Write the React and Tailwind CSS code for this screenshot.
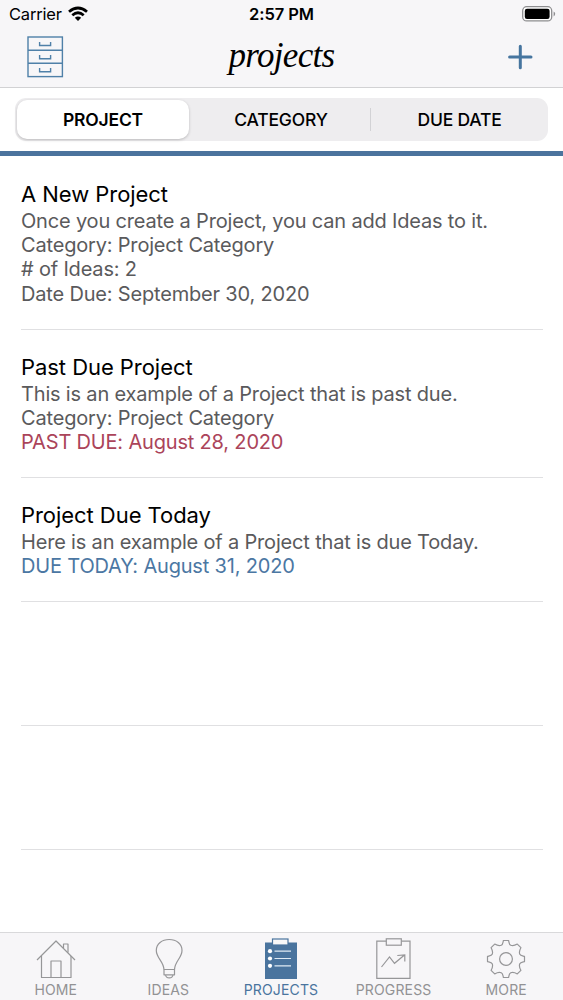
import React from "react";

const projects = [
  {
    title: "A New Project",
    height: "h-[173px]",
    lines: [
      { text: "Once you create a Project, you can add Ideas to it.", color: "text-[#5a5a5c]" },
      { text: "Category: Project Category", color: "text-[#5a5a5c]" },
      { text: "# of Ideas: 2", color: "text-[#5a5a5c]" },
      { text: "Date Due: September 30, 2020", color: "text-[#5a5a5c]" },
    ],
  },
  {
    title: "Past Due Project",
    height: "h-[148px]",
    lines: [
      { text: "This is an example of a Project that is past due.", color: "text-[#5a5a5c]" },
      { text: "Category: Project Category", color: "text-[#5a5a5c]" },
      { text: "PAST DUE: August 28, 2020", color: "text-[#ab445a]" },
    ],
  },
  {
    title: "Project Due Today",
    height: "h-[124px]",
    lines: [
      { text: "Here is an example of a Project that is due Today.", color: "text-[#5a5a5c]" },
      { text: "DUE TODAY: August 31, 2020", color: "text-[#4b77a3]" },
    ],
  },
];

function WifiIcon() {
  return (
    <svg className="ml-[6px] h-[16px] w-[20px]" viewBox="0 0 20 16" fill="none" stroke="#000" strokeWidth="2.8">
      <path d="M1 5.8Q10 -1.8 19 5.8" />
      <path d="M4.3 9.2Q10 4.4 15.7 9.2" />
      <path d="M6.8 11.8Q10 9 13.2 11.8L10 15Z" fill="#000" stroke="none" />
    </svg>
  );
}

function BatteryIcon() {
  return (
    <svg className="h-[16px] w-[34px]" viewBox="0 0 34 16">
      <rect x="0.7" y="0.7" width="29" height="14.2" rx="4" fill="#fff" stroke="#8d8d8f" strokeWidth="1.3" />
      <rect x="2.8" y="2.7" width="24.8" height="10.2" rx="2.2" fill="#000" />
      <path d="M31.6 5.4Q33.2 6 33.2 7.8T31.6 10.4Z" fill="#8d8d8f" />
    </svg>
  );
}

function CabinetIcon() {
  return (
    <svg className="h-[42px] w-[37px]" viewBox="0 0 37 42" fill="none" stroke="#4f80a8" strokeWidth="1.4">
      <rect x="1" y="1" width="34.4" height="39.6" />
      <path d="M1 14.2H35.4M1 27.2H35.4" />
      <path d="M12.6 6V9.5H23.6V6M12.6 19V22.8H23.6V19M12.6 32V35.8H23.6V32" />
    </svg>
  );
}

function HomeIcon() {
  return (
    <svg className="h-[44px] w-[44px]" viewBox="0 0 44 44" fill="none" stroke="#969698" strokeWidth="1.2" strokeLinejoin="round">
      <path d="M3 25L22 6L41 25" />
      <path d="M7.5 21V42.5H37V21" />
      <path d="M17 42.5V26H27V42.5" />
      <path d="M29.5 13V9H34V17.5" />
    </svg>
  );
}

function BulbIcon() {
  return (
    <svg className="h-[44px] w-[44px]" viewBox="0 0 44 44" fill="none" stroke="#969698" strokeWidth="1.2" strokeLinejoin="round">
      <path d="M17 34.5C16.5 26 9.3 23 9.3 15.5C9.3 8.8 15 4.5 22.2 4.5S35 8.8 35 15.5C35 23 27.8 26 27.5 34.5Z" />
      <path d="M17 34.5V39.8H27.5V34.5M18.5 39.8C19 44 25.5 44 26 39.8" />
    </svg>
  );
}

function ProjectsIcon() {
  return (
    <svg className="h-[44px] w-[44px]" viewBox="0 0 44 44">
      <rect x="6" y="7.5" width="32" height="36.5" fill="#4a749e" />
      <rect x="13.5" y="4" width="15.5" height="6" fill="#f7f7f8" stroke="#4a749e" strokeWidth="1.2" />
      <g fill="#fff">
        <circle cx="11" cy="16.2" r="2.1" /><circle cx="11" cy="23.5" r="2.1" /><circle cx="11" cy="30.8" r="2.1" />
      </g>
      <path d="M15.5 16.2H32M15.5 23.5H32M15.5 30.8H32" stroke="#dfeaf4" strokeWidth="1.2" />
    </svg>
  );
}

function ProgressIcon() {
  return (
    <svg className="h-[44px] w-[44px]" viewBox="0 0 44 44" fill="none" stroke="#969698" strokeWidth="1.2">
      <path d="M14.3 6.2H4.8V43.4H38V6.2H29.3" />
      <rect x="14.3" y="3.8" width="15" height="6.4" />
      <path d="M9.5 32L17.5 22L22.5 28.3L32.5 20M25.3 20.5L32.8 19.8V26.5" />
    </svg>
  );
}

function GearIcon() {
  return (
    <svg className="h-[44px] w-[44px]" viewBox="-22 -22 44 44" fill="none" stroke="#969698" strokeWidth="1.2" strokeLinejoin="round">
      <path
        transform="translate(-1 2)"
        d="M-2.6 -18.5H2.6C3.2 -15.8 3.2 -14.4 4.7 -13.8C6.6 -13 7.6 -12.8 11.3 -14.9L14.9 -11.3C12.8 -7.6 13 -6.6 13.8 -4.7C14.4 -3.2 15.8 -3.2 18.5 -2.6V2.6C15.8 3.2 14.4 3.2 13.8 4.7C13 6.6 12.8 7.6 14.9 11.3L11.3 14.9C7.6 12.8 6.6 13 4.7 13.8C3.2 14.4 3.2 15.8 2.6 18.5H-2.6C-3.2 15.8 -3.2 14.4 -4.7 13.8C-6.6 13 -7.6 12.8 -11.3 14.9L-14.9 11.3C-12.8 7.6 -13 6.6 -13.8 4.7C-14.4 3.2 -15.8 3.2 -18.5 2.6V-2.6C-15.8 -3.2 -14.4 -3.2 -13.8 -4.7C-13 -6.6 -12.8 -7.6 -14.9 -11.3L-11.3 -14.9C-7.6 -12.8 -6.6 -13 -4.7 -13.8C-3.2 -14.4 -3.2 -15.8 -2.6 -18.5Z"
      />
      <circle cx="-1" cy="2" r="6.4" />
    </svg>
  );
}

const tabs = [
  { label: "HOME", Icon: HomeIcon },
  { label: "IDEAS", Icon: BulbIcon },
  { label: "PROJECTS", Icon: ProjectsIcon, active: true },
  { label: "PROGRESS", Icon: ProgressIcon },
  { label: "MORE", Icon: GearIcon },
];

export default function App() {
  return (
    <div className="flex h-[1000px] w-[563px] flex-col overflow-hidden bg-white font-['Inter',sans-serif] text-black">
      <header className="h-[88px] shrink-0 border-b border-[#d2d2d4] bg-[#f7f6f8]">
        <div className="grid h-[28px] grid-cols-3 items-center">
          <div className="flex items-center pl-[9px] text-[16.5px]">
            <span className="pt-px tracking-[-0.2px]">Carrier</span>
            <WifiIcon />
          </div>
          <div className="pt-px text-center text-[16.5px] font-semibold tracking-[-0.05px]">2:57 PM</div>
          <div className="flex justify-end pr-[7px]"><BatteryIcon /></div>
        </div>
        <div className="grid h-[59px] grid-cols-3">
          <div className="pt-[8px] pl-[27px]"><CabinetIcon /></div>
          <h1 className="text-center font-['Liberation_Serif',serif] text-[35px] leading-[56px] tracking-[-0.7px] italic">projects</h1>
          <div className="flex justify-end pt-[16px] pr-[30px]">
            <svg className="h-[26px] w-[26px]" viewBox="0 0 26 26" stroke="#46759f" strokeWidth="3" strokeLinecap="round">
              <path d="M13.3 2.3V23.7M2.6 13H24" />
            </svg>
          </div>
        </div>
      </header>

      <div className="h-[63px] shrink-0 px-[15px] pt-[10px]">
        <div className="flex h-[43px] rounded-[11px] bg-[#eeedef] text-[17.5px] font-medium tracking-[-0.2px]">
          <div className="w-[176px] p-[2px]">
            <div className="flex h-full items-center justify-center rounded-[10px] bg-white pt-[2px] font-semibold shadow-[0_1px_3px_rgba(0,0,0,0.22)]">PROJECT</div>
          </div>
          <div className="flex w-[179px] items-center justify-center pt-[2px] pl-px">CATEGORY</div>
          <div className="my-[10px] flex grow items-center justify-center border-l border-[#d2d2d5] pt-[2px]">DUE DATE</div>
        </div>
      </div>
      <div className="h-[5px] shrink-0 bg-[#4b739d]" />

      <main className="flex grow flex-col pt-px pr-[20px] pl-[21px]">
        {projects.map((p) => (
          <section key={p.title} className={"flex shrink-0 flex-col border-b border-[#e0e0e2] pt-[24px] whitespace-nowrap " + p.height}>
            <h2 className="mb-[0.6px] text-[22px] leading-[27px] tracking-[-0.05px]">{p.title}</h2>
            {p.lines.map((l) => (
              <p key={l.text} className={"text-[20px] leading-[24.4px] tracking-[-0.18px] " + l.color}>{l.text}</p>
            ))}
          </section>
        ))}
        <div className="h-[124px] shrink-0 border-b border-[#e0e0e2]" />
        <div className="h-[124px] shrink-0 border-b border-[#e0e0e2]" />
      </main>

      <nav className="grid h-[68px] shrink-0 grid-cols-5 border-t border-[#d9d9db] bg-[#f7f6f8]">
        {tabs.map(({ label, Icon, active }) => (
          <div key={label} className={"flex flex-col items-center " + (active ? "text-[#4a749e]" : "text-[#929294]")}>
            <div className="h-[48px] pt-[2px]"><Icon /></div>
            <span className="pr-px text-[14px] leading-[17px] tracking-[0.15px]">{label}</span>
          </div>
        ))}
      </nav>
    </div>
  );
}
